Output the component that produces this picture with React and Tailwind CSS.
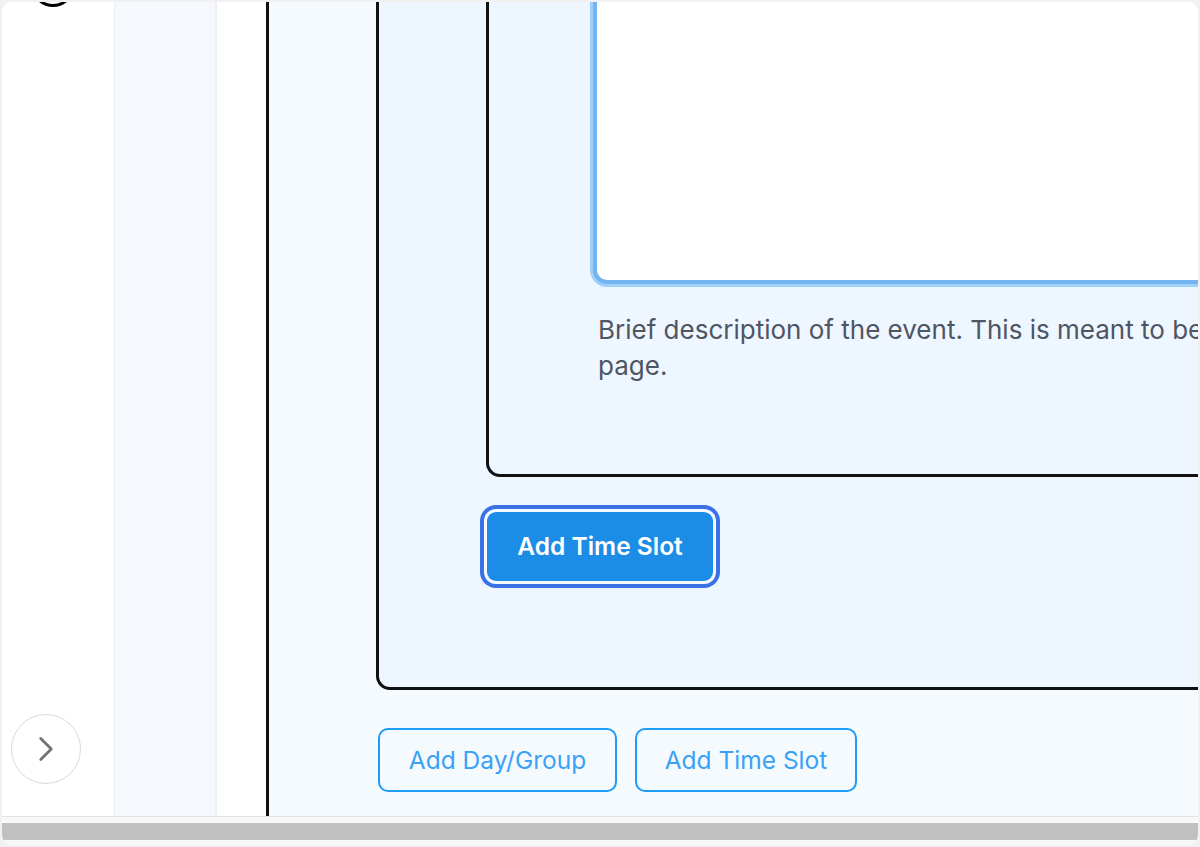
import { ChevronRight } from "lucide-react";

const OutlineButton = ({ children, width }) => (
  <button
    className={`h-[64px] ${width} shrink-0 rounded-[10px] border-2 border-[#1d9df6] bg-transparent text-[24.5px] text-[#3aa1f6]`}
  >
    {children}
  </button>
);

export default function App() {
  return (
    <div className="w-[1200px] h-[847px] bg-[#f1f1f1] p-[2px] font-['Inter',sans-serif]">
      <div className="flex h-full flex-col overflow-hidden rounded-[10px] bg-white">
        <div className="flex min-h-0 flex-1">
          {/* nav rail */}
          <aside className="flex w-[113px] shrink-0 flex-col justify-between overflow-hidden border-r border-[#ebebeb] bg-white">
            <div className="ml-[29px] mt-[-39px] h-[44px] w-[44px] rounded-full border-[3px] border-black" />
            <button className="mb-[32px] ml-[9px] flex h-[70px] w-[70px] items-center justify-center rounded-full border border-[#d9d9d9] bg-white">
              <ChevronRight size={42} strokeWidth={1.6} color="#727272" />
            </button>
          </aside>

          <div className="w-[102px] shrink-0 border-r-2 border-[#eceef1] bg-[#f5f9fd]" />
          <div className="w-[49px] shrink-0 bg-white" />

          {/* schedule editor */}
          <main className="flex min-w-0 flex-1 flex-col justify-end overflow-hidden border-l-[3px] border-[#111] bg-[#f5faff] pl-[107px]">
            <section className="flex shrink-0 flex-col items-start rounded-bl-[14px] border-b-[3px] border-l-[3px] border-[#111] bg-[#eef6ff] pb-[106px] pl-[107px]">
              <div className="flex w-full flex-col items-start rounded-bl-[14px] border-b-[3px] border-l-[3px] border-[#111] bg-[#eef6ff] pb-[90px] pl-[104px]">
                <div className="h-[420px] w-[700px] shrink-0 rounded-bl-[14px] border-b-[4px] border-l-[4px] border-[#74b4f0] bg-white shadow-[0_0_0_3px_#9dd0fb]" />
                <p className="ml-[5px] mt-[28px] whitespace-nowrap text-[26px] leading-[36px] text-[#4f5563]">
                  Brief description of the event. This is meant to be
                  <br />
                  page.
                </p>
              </div>

              <button className="ml-[1px] mt-[35px] h-[69px] w-[226px] rounded-[9px] bg-[#1b8de6] text-[24.5px] font-semibold text-white ring-[4px] ring-[#3a72e6] ring-offset-[3px] ring-offset-[#f4f9ff]">
                Add Time Slot
              </button>
            </section>

            <div className="ml-[2px] mt-[38px] mb-[24px] flex shrink-0 gap-[18px]">
              <OutlineButton width="w-[239px]">Add Day/Group</OutlineButton>
              <OutlineButton width="w-[222px]">Add Time Slot</OutlineButton>
            </div>
          </main>
        </div>

        {/* horizontal scrollbar */}
        <div className="h-[29px] shrink-0 border-t border-[#e4e4e4] bg-[#f8f8f8] pt-[6px]">
          <div className="h-[17px] w-full bg-[#c1c1c1]" />
        </div>
      </div>
    </div>
  );
}
